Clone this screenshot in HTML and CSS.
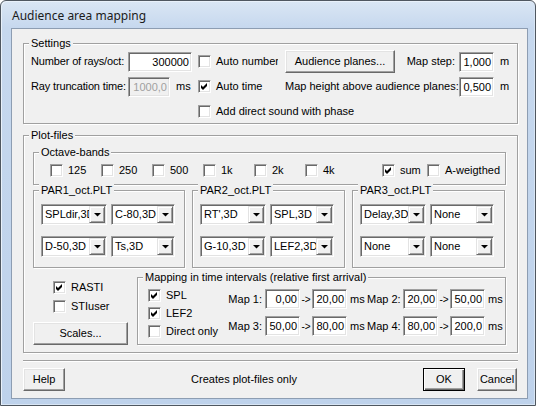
FILE: index.html
```
<!DOCTYPE html>
<html>
<head>
<meta charset="utf-8">
<link rel="stylesheet" href="styles.css">
</head>
<body>
<div class="window">
  <div class="titlebar">Audience area mapping</div>
  <div class="client">
    <div class="group settings">
      <span class="gtitle">Settings</span>
      <div class="settings-grid">
        <span class="lbl">Number of rays/oct:</span>
        <span class="edit w64">300000</span>
        <span class="check clip"><span class="cb"></span><span>Auto number</span></span>
        <span class="planes"><span class="btn planes-btn">Audience planes...</span><span class="lbl-r">Map step:</span></span>
        <span class="edit w35">1,000</span>
        <span class="unit">m</span>

        <span class="lbl">Ray truncation time:</span>
        <span class="edit-ms"><span class="edit w42 disabled">1000,0</span><span class="unit-ms">ms</span></span>
        <span class="check"><span class="cb checked"><svg width="7" height="7" viewBox="0 0 7 7"><polygon points="0,2 2,4 6,0 6,3 2,7 0,5" fill="#000"/></svg></span><span>Auto time</span></span>
        <span class="lbl-r">Map height above audience planes:</span>
        <span class="edit w35">0,500</span>
        <span class="unit">m</span>

        <span class="check rest"><span class="cb"></span><span>Add direct sound with phase</span></span>
      </div>
    </div>

    <div class="group plot">
      <span class="gtitle">Plot-files</span>
      <div class="group octave">
        <span class="gtitle">Octave-bands</span>
        <div class="oct-row">
          <span class="check oct-item"><span class="cb"></span><span>125</span></span>
          <span class="check oct-item"><span class="cb"></span><span>250</span></span>
          <span class="check oct-item"><span class="cb"></span><span>500</span></span>
          <span class="check oct-item"><span class="cb"></span><span>1k</span></span>
          <span class="check oct-item"><span class="cb"></span><span>2k</span></span>
          <span class="check oct-item"><span class="cb"></span><span>4k</span></span>
          <span class="check sum"><span class="cb checked"><svg width="7" height="7" viewBox="0 0 7 7"><polygon points="0,2 2,4 6,0 6,3 2,7 0,5" fill="#000"/></svg></span><span>sum</span></span>
          <span class="check"><span class="cb"></span><span>A-weigthed</span></span>
        </div>
      </div>

      <div class="par-row">
        <div class="group par">
          <span class="gtitle">PAR1_oct.PLT</span>
          <div class="combo-grid">
            <span class="combo"><span class="val">SPLdir,3D</span><span class="arrow"><svg width="7" height="4" viewBox="0 0 7 4"><polygon points="0,0 7,0 3.5,3.6" fill="#000"/></svg></span></span>
            <span class="combo"><span class="val">C-80,3D</span><span class="arrow"><svg width="7" height="4" viewBox="0 0 7 4"><polygon points="0,0 7,0 3.5,3.6" fill="#000"/></svg></span></span>
            <span class="combo"><span class="val">D-50,3D</span><span class="arrow"><svg width="7" height="4" viewBox="0 0 7 4"><polygon points="0,0 7,0 3.5,3.6" fill="#000"/></svg></span></span>
            <span class="combo"><span class="val">Ts,3D</span><span class="arrow"><svg width="7" height="4" viewBox="0 0 7 4"><polygon points="0,0 7,0 3.5,3.6" fill="#000"/></svg></span></span>
          </div>
        </div>
        <div class="group par">
          <span class="gtitle">PAR2_oct.PLT</span>
          <div class="combo-grid">
            <span class="combo"><span class="val">RT',3D</span><span class="arrow"><svg width="7" height="4" viewBox="0 0 7 4"><polygon points="0,0 7,0 3.5,3.6" fill="#000"/></svg></span></span>
            <span class="combo"><span class="val">SPL,3D</span><span class="arrow"><svg width="7" height="4" viewBox="0 0 7 4"><polygon points="0,0 7,0 3.5,3.6" fill="#000"/></svg></span></span>
            <span class="combo"><span class="val">G-10,3D</span><span class="arrow"><svg width="7" height="4" viewBox="0 0 7 4"><polygon points="0,0 7,0 3.5,3.6" fill="#000"/></svg></span></span>
            <span class="combo"><span class="val">LEF2,3D</span><span class="arrow"><svg width="7" height="4" viewBox="0 0 7 4"><polygon points="0,0 7,0 3.5,3.6" fill="#000"/></svg></span></span>
          </div>
        </div>
        <div class="group par">
          <span class="gtitle">PAR3_oct.PLT</span>
          <div class="combo-grid">
            <span class="combo"><span class="val">Delay,3D</span><span class="arrow"><svg width="7" height="4" viewBox="0 0 7 4"><polygon points="0,0 7,0 3.5,3.6" fill="#000"/></svg></span></span>
            <span class="combo"><span class="val">None</span><span class="arrow"><svg width="7" height="4" viewBox="0 0 7 4"><polygon points="0,0 7,0 3.5,3.6" fill="#000"/></svg></span></span>
            <span class="combo"><span class="val">None</span><span class="arrow"><svg width="7" height="4" viewBox="0 0 7 4"><polygon points="0,0 7,0 3.5,3.6" fill="#000"/></svg></span></span>
            <span class="combo"><span class="val">None</span><span class="arrow"><svg width="7" height="4" viewBox="0 0 7 4"><polygon points="0,0 7,0 3.5,3.6" fill="#000"/></svg></span></span>
          </div>
        </div>
      </div>

      <div class="lower">
        <div class="left-col">
          <span class="check row-a"><span class="cb checked"><svg width="7" height="7" viewBox="0 0 7 7"><polygon points="0,2 2,4 6,0 6,3 2,7 0,5" fill="#000"/></svg></span><span>RASTI</span></span>
          <span class="check row-b"><span class="cb"></span><span>STIuser</span></span>
          <span class="btn scales">Scales...</span>
        </div>
        <div class="group mapping">
          <span class="gtitle">Mapping in time intervals (relative first arrival)</span>
          <div class="map-checks">
            <span class="check"><span class="cb checked"><svg width="7" height="7" viewBox="0 0 7 7"><polygon points="0,2 2,4 6,0 6,3 2,7 0,5" fill="#000"/></svg></span><span>SPL</span></span>
            <span class="check"><span class="cb checked"><svg width="7" height="7" viewBox="0 0 7 7"><polygon points="0,2 2,4 6,0 6,3 2,7 0,5" fill="#000"/></svg></span><span>LEF2</span></span>
            <span class="check"><span class="cb"></span><span>Direct only</span></span>
          </div>
          <div class="map-grid">
            <span class="mlbl">Map 1:</span><span class="edit">0,00</span><span class="arr">-&gt;</span><span class="edit">20,00</span><span class="ms">ms</span>
            <span class="mlbl">Map 2:</span><span class="edit">20,00</span><span class="arr">-&gt;</span><span class="edit">50,00</span><span class="ms">ms</span>
            <span class="mlbl">Map 3:</span><span class="edit">50,00</span><span class="arr">-&gt;</span><span class="edit">80,00</span><span class="ms">ms</span>
            <span class="mlbl">Map 4:</span><span class="edit">80,00</span><span class="arr">-&gt;</span><span class="edit">200,0</span><span class="ms">ms</span>
          </div>
        </div>
      </div>
    </div>

    <div class="sep"></div>

    <div class="footer">
      <span class="btn help">Help</span>
      <span class="note">Creates plot-files only</span>
      <span class="btn default ok">OK</span>
      <span class="btn cancel">Cancel</span>
    </div>
  </div>
</div>
</body>
</html>
```
FILE: styles.css
```
* { box-sizing: border-box; }

body {
  margin: 0;
  background: #fff;
  font-family: "Liberation Sans", Arial, sans-serif;
  font-size: 11px;
  line-height: 13px;
  color: #000;
}

.window {
  width: 536px;
  height: 406px;
  border: 1px solid #4f5760;
  border-radius: 6px 6px 0 0;
  background: linear-gradient(180deg, #dae6f4 0, #c6d8ee 27px, #bed2eb 100%);
  padding: 0 7px 6px 10px;
  display: flex;
  flex-direction: column;
  box-shadow: inset 1px 1px 0 #e9f1fa, inset -1px -1px 0 #d8e5f4;
}

.titlebar {
  height: 27px;
  padding: 1px 0 0 1px;
  display: flex;
  align-items: center;
  font-family: "Noto Sans", "Open Sans", sans-serif;
  font-size: 12px;
  color: #1b1b1b;
}

.client {
  flex: 1;
  background: #f0f0f0;
  border: 1px solid #8d9db2;
  display: flex;
  flex-direction: column;
}

/* group boxes */
.group {
  position: relative;
  border: 1px solid #a0a0a0;
  box-shadow: inset 1px 1px 0 #fff, 1px 1px 0 #fff;
}
.gtitle {
  position: absolute;
  top: -7px;
  left: 5px;
  padding: 0 2px;
  background: #f0f0f0;
  white-space: nowrap;
  line-height: 13px;
}

/* controls */
.cb {
  flex: none;
  width: 13px;
  height: 13px;
  background: #fff;
  border: 1px solid;
  border-color: #a0a0a0 #fff #fff #a0a0a0;
  box-shadow: inset 1px 1px 0 #696969, inset -1px -1px 0 #e3e3e3;
  display: flex;
  align-items: center;
  justify-content: center;
}
.cb svg { display: block; }

.check {
  display: flex;
  align-items: center;
  gap: 5px;
  white-space: nowrap;
}

.edit {
  display: block;
  height: 20px;
  background: #fff;
  border: 1px solid;
  border-color: #a0a0a0 #fff #fff #a0a0a0;
  box-shadow: inset 1px 1px 0 #696969, inset -1px -1px 0 #e3e3e3;
  text-align: right;
  padding: 0 2px;
  line-height: 18px;
  white-space: nowrap;
  overflow: hidden;
}
.edit.disabled { background: #f0f0f0; color: #a0a0a0; }
.w64 { width: 64px; }
.w42 { width: 42px; }
.w35 { width: 35px; }

.btn {
  display: flex;
  align-items: center;
  justify-content: center;
  height: 23px;
  background: #f0f0f0;
  border: 1px solid;
  border-color: #fff #696969 #696969 #fff;
  box-shadow: inset -1px -1px 0 #a0a0a0, inset 1px 1px 0 #e3e3e3;
  white-space: nowrap;
}
.btn.default {
  border-color: #000;
  box-shadow: inset 1px 1px 0 #fff, inset -1px -1px 0 #696969, inset -2px -2px 0 #a0a0a0;
}

.combo {
  display: flex;
  height: 21px;
  background: #fff;
  border: 1px solid;
  border-color: #a0a0a0 #fff #fff #a0a0a0;
  box-shadow: inset 1px 1px 0 #696969, inset -1px -1px 0 #e3e3e3;
  padding: 1px;
}
.combo .val {
  flex: 1;
  min-width: 0;
  overflow: hidden;
  white-space: nowrap;
  padding-left: 2px;
  line-height: 17px;
}
.combo .arrow {
  flex: none;
  width: 16px;
  background: #f0f0f0;
  border: 1px solid;
  border-color: #e3e3e3 #696969 #696969 #e3e3e3;
  box-shadow: inset 1px 1px 0 #fff, inset -1px -1px 0 #a0a0a0;
  display: flex;
  align-items: center;
  justify-content: center;
}
.combo .arrow svg { display: block; }

/* settings */
.settings {
  width: 495px;
  height: 81px;
  margin: 14px 0 0 11px;
  padding: 5px 0 0 7px;
}
.settings-grid {
  display: grid;
  grid-template-columns: 97px 70px 87px 174px 41px auto;
  grid-template-rows: 25px 25px 24px;
  align-items: center;
}
.lbl { white-space: nowrap; letter-spacing: -0.15px; }
.lbl-r { white-space: nowrap; text-align: right; padding-right: 5px; }
.clip { width: 80px; overflow: hidden; }
.planes { display: flex; align-items: center; justify-content: space-between; }
.planes .lbl-r { padding-right: 4px; }
.planes-btn { width: 110px; }
.edit-ms { display: flex; align-items: center; gap: 6px; }
.rest { grid-column: 3 / -1; }

/* plot files */
.plot {
  width: 495px;
  height: 218px;
  margin: 11px 0 0 11px;
  padding: 16px 0 0 9px;
}
.octave {
  width: 473px;
  height: 33px;
  padding-top: 5px;
}
.oct-row {
  display: flex;
  align-items: center;
  height: 24px;
  padding-left: 16px;
}
.oct-item { width: 51px; }
.sum { width: 45px; margin-left: 26px; }

.par-row {
  display: grid;
  grid-template-columns: 152px 153px 153px;
  column-gap: 7px;
  margin-top: 5px;
}
.par {
  height: 78px;
  padding: 13px 0 0 7px;
}
.combo-grid {
  display: grid;
  grid-template-columns: 66px 64px;
  grid-auto-rows: 21px;
  column-gap: 4px;
  row-gap: 11px;
}

.lower {
  display: flex;
  margin-top: 9px;
}
.left-col {
  width: 104px;
  display: flex;
  flex-direction: column;
}
.left-col .check { margin-left: 20px; }
.row-a { height: 20px; }
.row-b { height: 19px; }
.scales { width: 95px; margin-top: 6px; }

.mapping {
  width: 369px;
  height: 68px;
  display: flex;
  padding: 8px 0 0 10px;
}
.map-checks {
  width: 80px;
  display: flex;
  flex-direction: column;
}
.map-checks .check { height: 18px; }
.map-grid {
  margin-top: 3px;
  display: grid;
  grid-template-columns: 37px 35px 12px 35px 20px 36px 35px 12px 35px 20px;
  grid-auto-rows: 20px;
  row-gap: 7px;
  align-items: center;
}
.mlbl { text-align: right; padding-right: 3px; white-space: nowrap; }
.arr { text-align: center; font-size: 10px; }
.ms { padding-left: 3px; }

.sep {
  width: 495px;
  height: 2px;
  margin: 7px 0 0 11px;
  border-top: 1px solid #a0a0a0;
  border-bottom: 1px solid #fff;
}

.footer {
  display: flex;
  align-items: center;
  width: 494px;
  margin: 6px 0 0 11px;
}
.help { width: 42px; }
.note { flex: 1; text-align: center; }
.ok { width: 42px; margin-right: 12px; }
.cancel { width: 40px; }
```
